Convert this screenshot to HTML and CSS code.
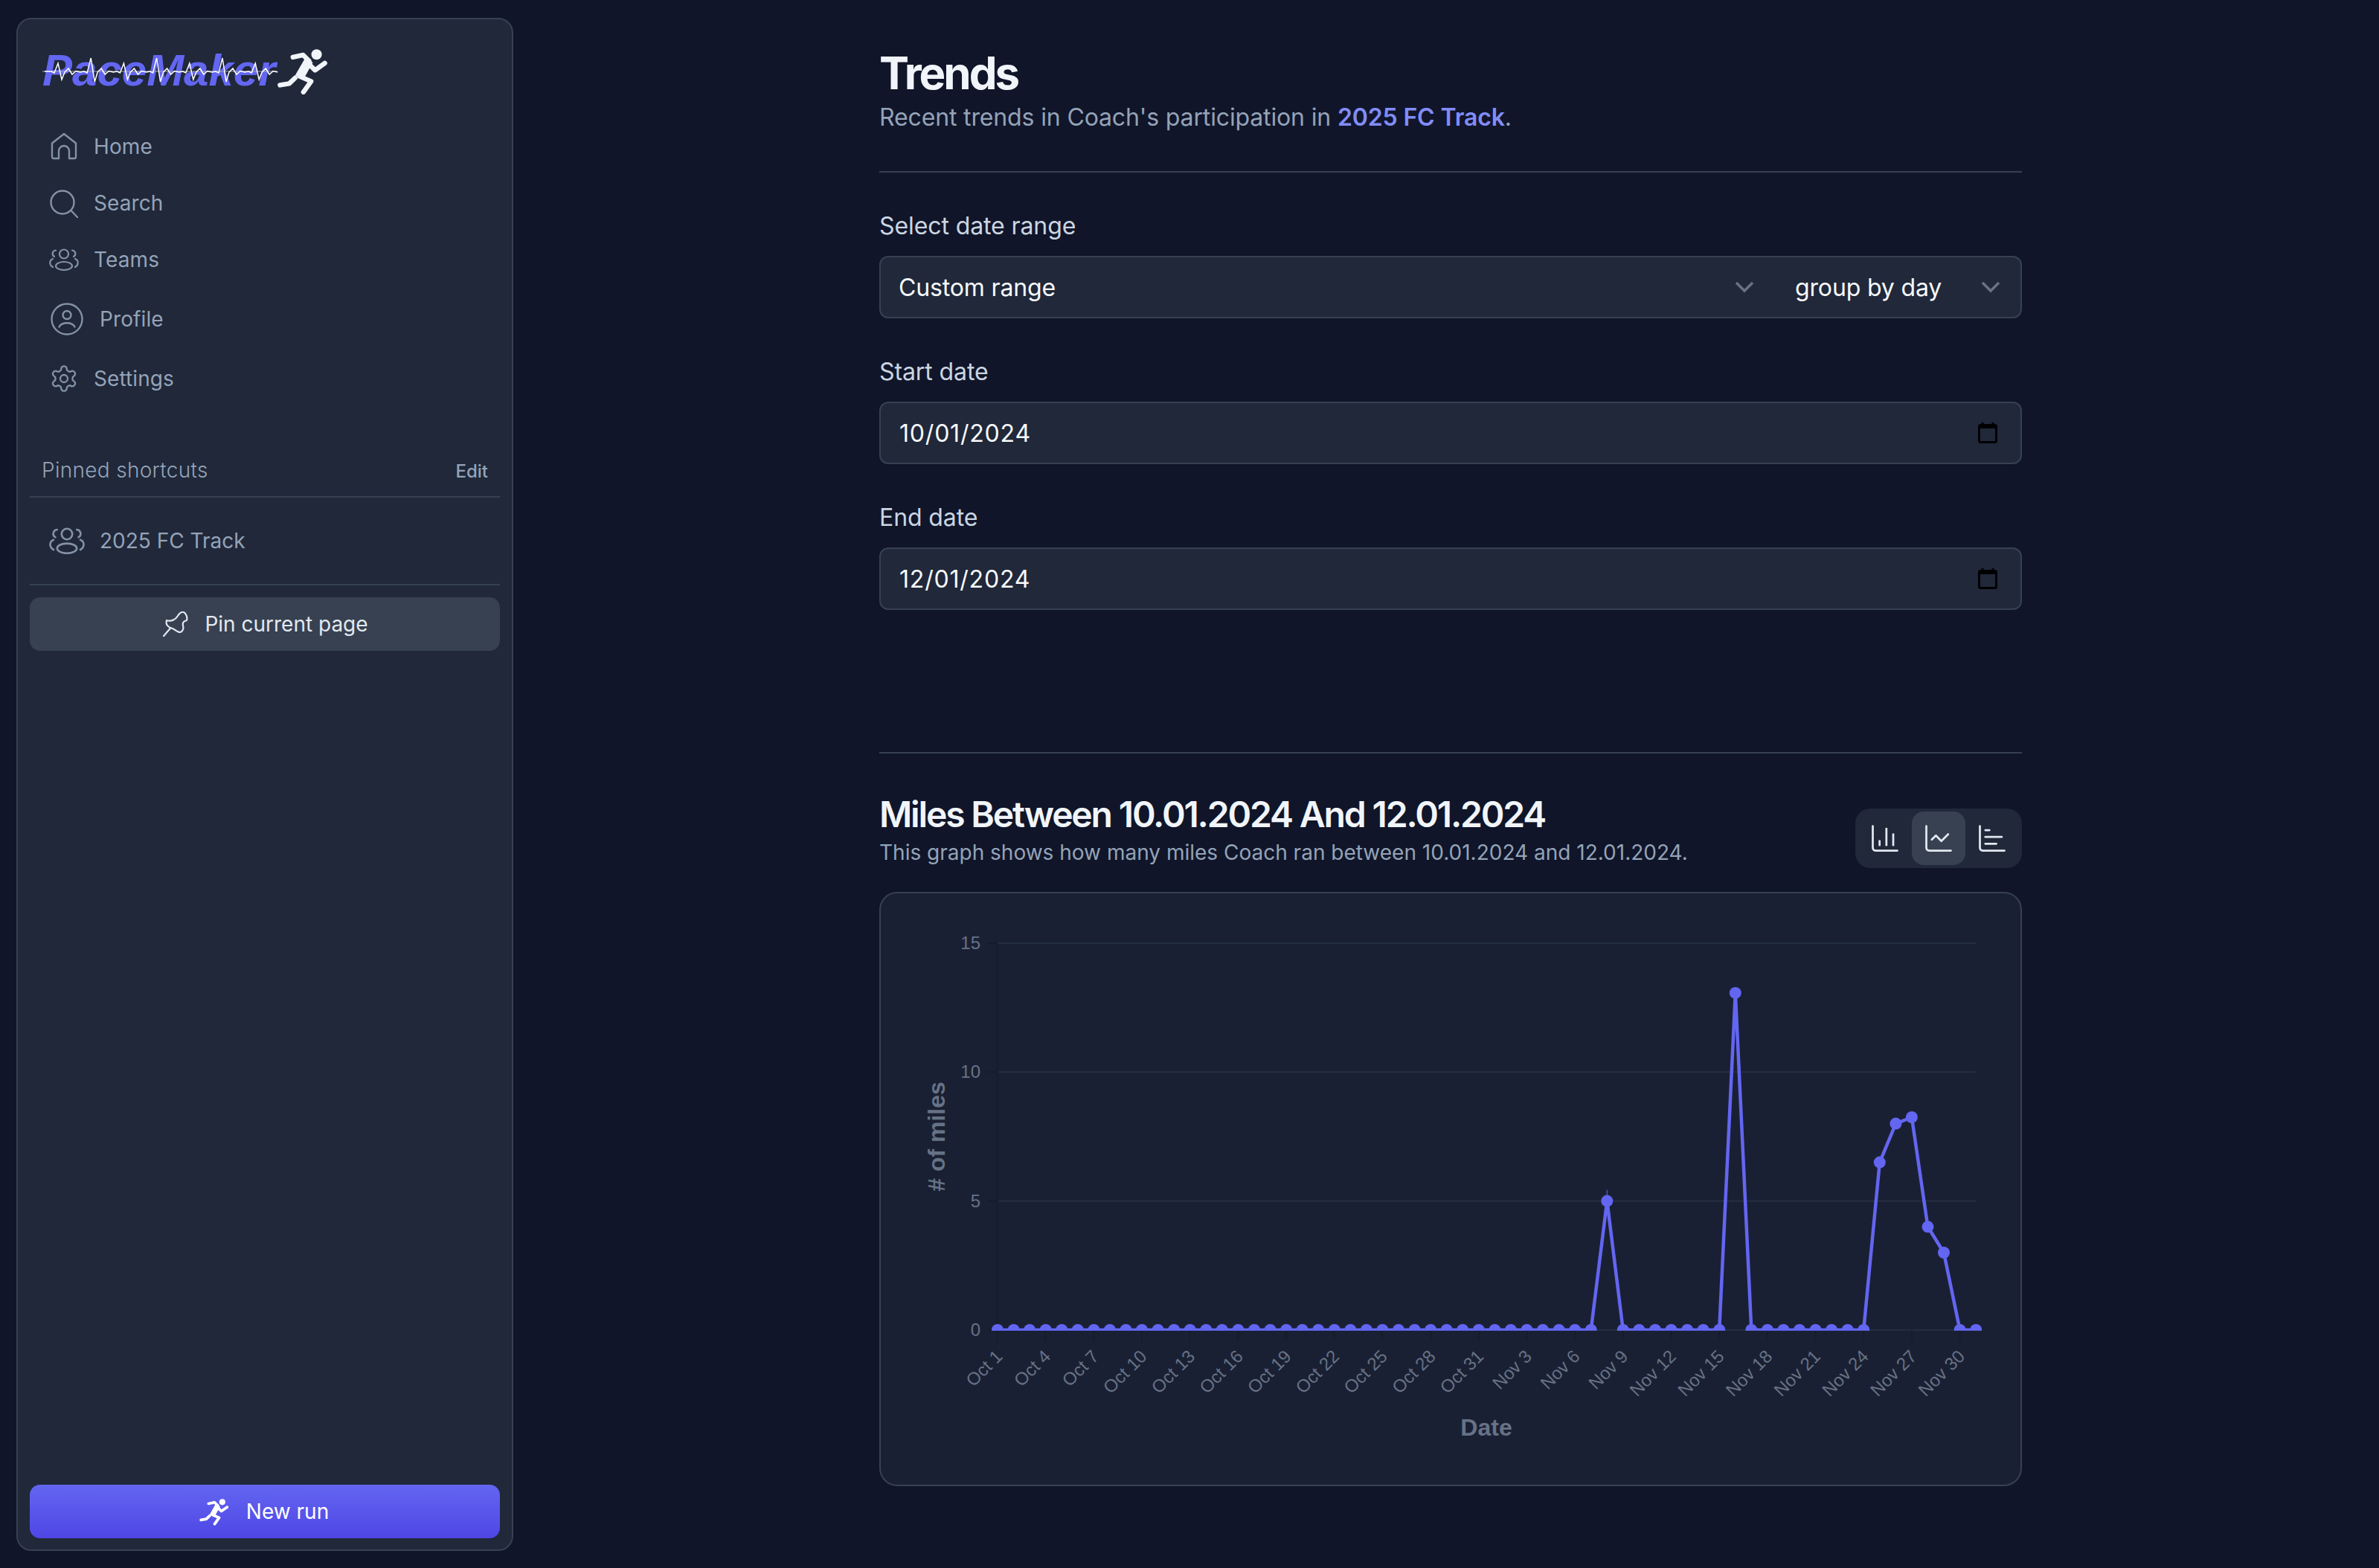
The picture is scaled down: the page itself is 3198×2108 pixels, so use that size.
FILE: index.html
```html
<!DOCTYPE html>
<html lang="en">
<head>
  <meta charset="UTF-8">
  <title>PaceMaker – Trends</title>
  <link rel="stylesheet" href="styles.css">
</head>
<body>

<svg class="defs" width="0" height="0">
  <symbol id="runner" viewBox="995 70 215 190">
    <circle cx="1158" cy="100" r="21" fill="currentColor"/>
    <g fill="none" stroke="currentColor" stroke-width="19" stroke-linecap="round" stroke-linejoin="round">
      <path d="M1063 111 L1104 102 L1128 126"/>
      <path d="M1128 140 L1152 163 L1191 135"/>
      <path d="M1090 188 L1136 208 L1105 251"/>
      <path d="M1072 194 L1048 217 L1011 223"/>
    </g>
    <path d="M1113 113 L1143 132 L1105 200 L1072 184 Z" fill="currentColor"/>
  </symbol>
  <symbol id="team" viewBox="0 0 40 30">
    <g fill="none" stroke="currentColor" stroke-width="2.2" stroke-linecap="round">
      <circle cx="20" cy="7.5" r="6"/>
      <ellipse cx="20" cy="23.5" rx="11" ry="5.5"/>
      <path d="M9 2.500C4.500 3 3 8.500 7 11"/>
      <path d="M31 2.500C35.500 3 37 8.500 33 11"/>
      <path d="M5 14C0 16 0 22 5 25"/>
      <path d="M35 14C40 16 40 22 35 25"/>
    </g>
  </symbol>
</svg>

<div class="app">
  <aside class="sidebar">
    <div class="logo">
      <svg width="400" height="70" viewBox="0 0 400 70">
        <text class="logo-text" x="5" y="55">PaceMaker</text>
        <line x1="5" y1="36" x2="321" y2="36" stroke="#a3a8b4" stroke-width="1"/>
        <path id="ecg" fill="none" stroke="#fff" stroke-width="1.5"/>
        <use href="#runner" x="319" y="3" width="72" height="64" color="#f1f5f9"/>
      </svg>
    </div>

    <nav class="nav">
      <a class="nav-item">
        <svg class="nav-icon" viewBox="0 0 40 40">
          <path d="M4 15.500L20 3l16 12.500V34a2 2 0 0 1-2 2h-7V26a7 7 0 0 0-14 0v10H6a2 2 0 0 1-2-2z"/>
        </svg>
        Home
      </a>
      <a class="nav-item">
        <svg class="nav-icon" viewBox="0 0 40 40">
          <circle cx="18" cy="19" r="15.500"/>
          <path d="M29.500 30L38 39"/>
        </svg>
        Search
      </a>
      <a class="nav-item">
        <svg class="nav-icon-team"><use href="#team"/></svg>
        Teams
      </a>
      <a class="nav-item nav-item-big">
        <svg class="nav-icon nav-icon-big" viewBox="0 0 48 48">
          <circle cx="24" cy="24" r="20.500"/>
          <circle cx="24" cy="18.500" r="5.500"/>
          <path d="M13.500 34.500C17 27.500 31 27.500 34.500 34.500"/>
        </svg>
        Profile
      </a>
      <a class="nav-item">
        <svg class="nav-icon" viewBox="0 0 24 24">
          <path class="thin" d="M12.220 2h-.44a2 2 0 0 0-2 2v.18a2 2 0 0 1-1 1.730l-.43.25a2 2 0 0 1-2 0l-.15-.08a2 2 0 0 0-2.730.73l-.22.38a2 2 0 0 0 .73 2.730l.15.1a2 2 0 0 1 1 1.720v.51a2 2 0 0 1-1 1.740l-.15.09a2 2 0 0 0-.73 2.730l.22.38a2 2 0 0 0 2.730.73l.15-.08a2 2 0 0 1 2 0l.43.25a2 2 0 0 1 1 1.730V20a2 2 0 0 0 2 2h.44a2 2 0 0 0 2-2v-.18a2 2 0 0 1 1-1.730l.43-.25a2 2 0 0 1 2 0l.15.08a2 2 0 0 0 2.730-.73l.22-.39a2 2 0 0 0-.73-2.730l-.15-.08a2 2 0 0 1-1-1.740v-.5a2 2 0 0 1 1-1.740l.15-.09a2 2 0 0 0 .73-2.730l-.22-.38a2 2 0 0 0-2.730-.73l-.15.08a2 2 0 0 1-2 0l-.43-.25a2 2 0 0 1-1-1.730V4a2 2 0 0 0-2-2z"/>
          <circle class="thin" cx="12" cy="12" r="3"/>
        </svg>
        Settings
      </a>
    </nav>

    <div class="pinned-head">
      <span>Pinned shortcuts</span>
      <a class="edit">Edit</a>
    </div>
    <a class="pinned-item">
      <svg class="pinned-icon"><use href="#team"/></svg>
      2025 FC Track
    </a>

    <button class="btn btn-pin">
      <svg width="34" height="34" viewBox="0 0 34 34" fill="none" stroke="currentColor" stroke-width="2.200" stroke-linejoin="round" stroke-linecap="round">
        <path d="M1 33l9.500-11"/>
        <path d="M5 12C11 14 17 11 20 6C22 2 26 0 28 1C32 3 33 9 32 12C28 13 26 15 27 19C28 23 27 27 23 28C19 28 16 24 13 23C8 22 3 18 5 12Z"/>
      </svg>
      Pin current page
    </button>

    <button class="btn btn-run">
      <svg width="42" height="38"><use href="#runner"/></svg>
      New run
    </button>
  </aside>

  <main class="content">
    <h1>Trends</h1>
    <p class="subtitle">Recent trends in Coach's participation in <a class="link">2025 FC Track</a>.</p>
    <hr class="rule">

    <label class="field-label first">Select date range</label>
    <div class="select-group">
      <div class="field field-main">
        Custom range
        <svg class="chevron" width="26" height="16" viewBox="0 0 26 16"><path d="M2 2l11 11L24 2"/></svg>
      </div>
      <div class="field field-group">
        group by day
        <svg class="chevron" width="26" height="16" viewBox="0 0 26 16"><path d="M2 2l11 11L24 2"/></svg>
      </div>
    </div>

    <label class="field-label">Start date</label>
    <div class="field field-date">
      <span class="date-text">10/01/2024</span>
      <svg class="calendar" width="26" height="28" viewBox="0 0 26 28"><path d="M6 0v4M20 0v4"/><rect x="1.500" y="3.500" width="23" height="23" rx="2"/><path class="band" d="M1.500 6.500h23"/></svg>
    </div>

    <label class="field-label">End date</label>
    <div class="field field-date">
      <span class="date-text">12/01/2024</span>
      <svg class="calendar" width="26" height="28" viewBox="0 0 26 28"><path d="M6 0v4M20 0v4"/><rect x="1.500" y="3.500" width="23" height="23" rx="2"/><path class="band" d="M1.500 6.500h23"/></svg>
    </div>

    <hr class="rule rule-chart">

    <div class="chart-head">
      <div>
        <h2>Miles Between 10.01.2024 And 12.01.2024</h2>
        <p class="chart-sub">This graph shows how many miles Coach ran between 10.01.2024 and 12.01.2024.</p>
      </div>
      <div class="toggle">
        <button class="toggle-btn">
          <svg viewBox="0 0 24 24"><path d="M3 3v16a2 2 0 0 0 2 2h16"/><path d="M18 17V9"/><path d="M13 17V5"/><path d="M8 17v-3"/></svg>
        </button>
        <button class="toggle-btn active">
          <svg viewBox="0 0 24 24"><path d="M3 3v16a2 2 0 0 0 2 2h16"/><path d="m19 9-5 5-4-4-3 3"/></svg>
        </button>
        <button class="toggle-btn">
          <svg viewBox="0 0 24 24"><path d="M3 3v16a2 2 0 0 0 2 2h16"/><path d="M7 16h8"/><path d="M7 11h12"/><path d="M7 6h3"/></svg>
        </button>
      </div>
    </div>

    <div class="chart-card">
      <svg id="chart" width="1532" height="795" viewBox="0 0 1532 795"></svg>
    </div>
  </main>
</div>

<script>
  // logo heartbeat, one beat every 44px
  let ecg = "M8 36";
  for (let i = 0; i < 7; i++) {
    const x = 26 + i * 44.2;
    const top = i % 2 ? 18 : 25;
    const deep = i % 2 ? 50 : 47;
    ecg += ` L${x - 9} 36 L${x - 5} 38 L${x} ${top} L${x + 5} ${deep} L${x + 9} 37 L${x + 14} 32 L${x + 19} 40 L${x + 24} 35.5 L${x + 30} 37`;
  }
  document.getElementById("ecg").setAttribute("d", ecg);

  // chart
  const left = 157, bottom = 587, stepX = 21.56, stepY = 34.67;
  const months = ["Oct", "Nov"];
  const miles = new Array(62).fill(0);
  miles[38] = 5;
  miles[46] = 13.07;
  miles[55] = 6.5;
  miles[56] = 8;
  miles[57] = 8.25;
  miles[58] = 4;
  miles[59] = 3;

  const xAt = (i) => left + i * stepX;
  const yAt = (v) => bottom - v * stepY;

  function dateLabel(i) {
    return i <= 30 ? `${months[0]} ${i + 1}` : `${months[1]} ${i - 30}`;
  }

  let html = `<defs><clipPath id="plot"><rect x="130" y="0" width="1380" height="${bottom + 1}"/></clipPath></defs>`;

  [0, 5, 10, 15].forEach((v) => {
    const y = yAt(v);
    if (v > 0) {
      html += `<line class="grid" x1="${left}" y1="${y}" x2="1472" y2="${y}"/>`;
    }
    html += `<line class="tick" x1="${left - 14}" y1="${y}" x2="${left}" y2="${y}"/>`;
    html += `<text class="tick-label" x="134" y="${y + 8}" text-anchor="end">${v}</text>`;
  });

  html += `<line class="tick" x1="${left}" y1="${yAt(15)}" x2="${left}" y2="${bottom}"/>`;
  html += `<line class="grid" x1="${left}" y1="${bottom}" x2="1472" y2="${bottom}"/>`;

  for (let i = 0; i <= 60; i += 3) {
    const x = xAt(i);
    html += `<line class="tick" x1="${x}" y1="${bottom}" x2="${x}" y2="${bottom + 16}"/>`;
    html += `<text class="tick-label" text-anchor="end" transform="translate(${x + 8} ${bottom + 37}) rotate(-45)">${dateLabel(i)}</text>`;
  }

  const pts = miles.map((v, i) => `${xAt(i).toFixed(1)},${yAt(v).toFixed(1)}`).join(" ");
  html += `<g clip-path="url(#plot)"><polyline class="line" points="${pts}"/>`;
  miles.forEach((v, i) => {
    html += `<circle class="dot" cx="${xAt(i).toFixed(1)}" cy="${yAt(v).toFixed(1)}" r="8"/>`;
  });
  html += `<line class="spike" x1="${xAt(38)}" y1="${yAt(5) - 15}" x2="${xAt(38)}" y2="${yAt(5)}"/></g>`;

  html += `<text class="axis-title" text-anchor="middle" transform="translate(86 327) rotate(-90)"># of miles</text>`;
  html += `<text class="axis-title" text-anchor="middle" x="814" y="729">Date</text>`;

  document.getElementById("chart").innerHTML = html;
</script>

</body>
</html>
```

FILE: styles.css
```css
* {
  box-sizing: border-box;
}

html, body {
  margin: 0;
  padding: 0;
}

body {
  font-family: Inter, "Liberation Sans", sans-serif;
  background: #101529;
  color: #f1f5f9;
}

.defs {
  display: block;
  height: 0;
}

.app {
  display: flex;
  min-height: 2108px;
}

/* sidebar */

.sidebar {
  display: flex;
  flex-direction: column;
  width: 668px;
  margin: 24px 0 23px 22px;
  padding: 16px 16px 15px;
  background: #20283a;
  border: 2px solid #374151;
  border-radius: 20px;
}

.logo {
  height: 117px;
  padding: 18px 0 0 12px;
}

.logo svg {
  display: block;
}

.logo-text {
  font-family: "Liberation Sans", sans-serif;
  font-weight: 700;
  font-style: italic;
  font-size: 60px;
  fill: #6366f1;
}

.nav {
  display: flex;
  flex-direction: column;
}

.nav-item {
  display: flex;
  align-items: center;
  gap: 20px;
  height: 76px;
  padding-left: 26px;
  font-size: 28px;
  letter-spacing: 0.1px;
  color: #94a3b8;
}

.nav-item-big {
  height: 84px;
}

.nav-icon {
  width: 40px;
  height: 40px;
  fill: none;
  stroke: #8492a6;
  stroke-width: 2.4;
  stroke-linecap: round;
  stroke-linejoin: round;
}

.nav-icon .thin {
  stroke-width: 1.4;
}

.nav-icon-big {
  width: 48px;
  height: 48px;
}

.nav-icon-team {
  width: 40px;
  height: 30px;
  color: #8492a6;
}

.pinned-head {
  display: flex;
  justify-content: space-between;
  align-items: baseline;
  height: 73px;
  margin-top: 49px;
  padding: 18px 16px 0;
  font-size: 28px;
  line-height: 36px;
  font-weight: 300;
  letter-spacing: 0.3px;
  color: #94a3b8;
  border-bottom: 2px solid #374151;
}

.edit {
  font-size: 24px;
  font-weight: 500;
  letter-spacing: 0;
}

.pinned-item {
  display: flex;
  align-items: center;
  gap: 20px;
  height: 118px;
  padding-left: 26px;
  font-size: 28px;
  color: #94a3b8;
  border-bottom: 2px solid #374151;
}

.pinned-icon {
  width: 48px;
  height: 36px;
  color: #8492a6;
}

.btn {
  display: flex;
  align-items: center;
  justify-content: center;
  gap: 22px;
  width: 100%;
  height: 72px;
  border: 0;
  border-radius: 14px;
  font-family: inherit;
  font-size: 28px;
}

.btn-pin {
  margin-top: 16px;
  padding-left: 8px;
  background: #374151;
  color: #e2e8f0;
}

.btn-run {
  margin-top: auto;
  padding-right: 9px;
  background: linear-gradient(#6366f1, #4f46e5);
  color: #fff;
}

/* main column */

.content {
  width: 1536px;
  margin-left: 492px;
  padding-top: 62px;
}

h1 {
  margin: 0;
  font-size: 60px;
  line-height: 72px;
  font-weight: 700;
  letter-spacing: -3px;
  color: #f1f5f9;
}

.subtitle {
  margin: 0;
  font-size: 32px;
  line-height: 48px;
  letter-spacing: -0.14px;
  color: #94a3b8;
}

.link {
  color: #818cf8;
  font-weight: 600;
}

.rule {
  height: 2px;
  margin: 48px 0 0;
  border: 0;
  background: #374151;
}

.field-label {
  display: block;
  margin-top: 48px;
  margin-bottom: 16px;
  font-size: 32px;
  line-height: 48px;
  letter-spacing: -0.1px;
  color: #cbd5e1;
}

.select-group {
  display: flex;
}

.field {
  display: flex;
  align-items: center;
  justify-content: space-between;
  height: 84px;
  background: #20283a;
  border: 2px solid #374151;
  border-radius: 12px;
  font-size: 32px;
  letter-spacing: -0.15px;
  color: #f8fafc;
}

.field-main {
  flex: 1;
  padding: 0 29px 0 24px;
  border-right: 0;
  border-radius: 12px 0 0 12px;
}

.field-group {
  width: 331px;
  padding: 0 27px 0 26px;
  border-left: 0;
  border-radius: 0 12px 12px 0;
}

.field-date {
  padding: 0 31px 0 25px;
}

.date-text {
  letter-spacing: 0.8px;
}

.chevron path {
  fill: none;
  stroke: #6b7280;
  stroke-width: 3.5;
}

.calendar {
  fill: none;
  stroke: #000;
  stroke-width: 3;
}

.calendar .band {
  stroke-width: 3;
}

.rule-chart {
  margin-top: 191px;
}

.chart-head {
  display: flex;
  justify-content: space-between;
  align-items: flex-end;
  margin-top: 52px;
}

h2 {
  margin: 0;
  font-size: 48px;
  line-height: 60px;
  font-weight: 600;
  letter-spacing: -2.15px;
  color: #f1f5f9;
}

.chart-sub {
  margin: 0;
  font-size: 28px;
  line-height: 42px;
  color: #94a3b8;
}

.toggle {
  display: flex;
  padding: 4px;
  background: #20283a;
  border-radius: 20px;
}

.toggle-btn {
  display: flex;
  align-items: center;
  justify-content: center;
  width: 72px;
  height: 72px;
  padding: 0;
  border: 0;
  border-radius: 16px;
  background: transparent;
}

.toggle-btn.active {
  background: #374151;
}

.toggle-btn svg {
  width: 44px;
  height: 44px;
  fill: none;
  stroke: #e2e8f0;
  stroke-width: 1.5;
  stroke-linecap: round;
  stroke-linejoin: round;
}

.chart-card {
  height: 799px;
  margin-top: 32px;
  background: #1a2033;
  border: 2px solid #374151;
  border-radius: 24px;
}

.chart-card svg {
  display: block;
}

.grid {
  stroke: #242e41;
  stroke-width: 2;
}

.tick {
  stroke: #151c2c;
  stroke-width: 2;
}

.tick-label {
  font-family: "Liberation Sans", sans-serif;
  font-size: 24px;
  fill: #667286;
}

.axis-title {
  font-family: "Liberation Sans", sans-serif;
  font-size: 32px;
  font-weight: 700;
  fill: #667286;
}

.line {
  fill: none;
  stroke: #6366f1;
  stroke-width: 4.5;
  stroke-linejoin: bevel;
}

.dot {
  fill: #6366f1;
}

.spike {
  stroke: #6366f1;
  stroke-width: 1;
}
```
